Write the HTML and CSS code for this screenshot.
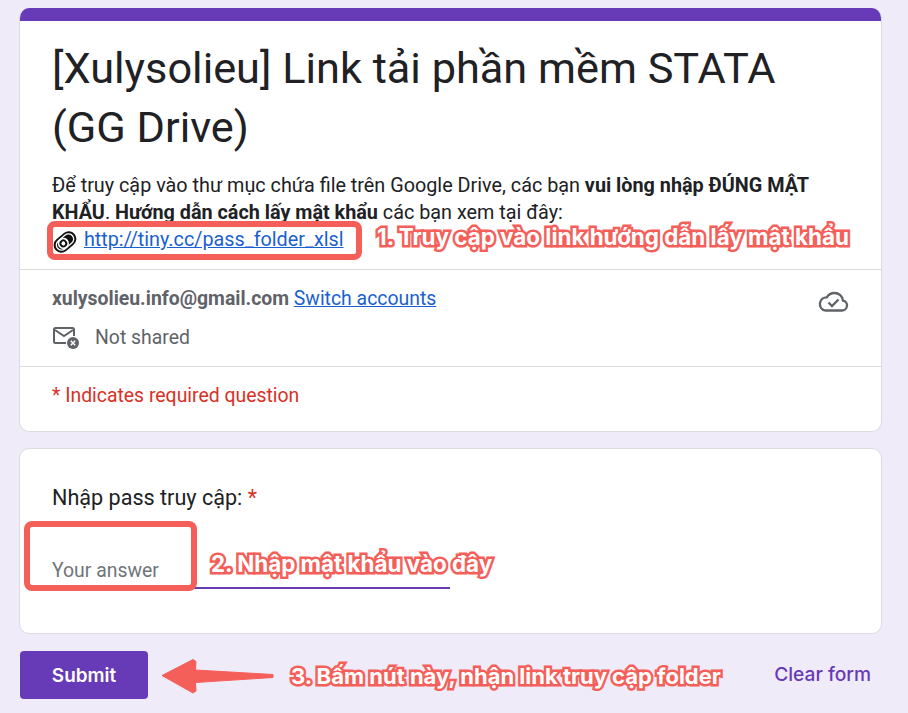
FILE: index.html
```html
<!DOCTYPE html>
<html lang="en-US">
<head>
<meta charset="utf-8">
<meta name="viewport" content="width=device-width, initial-scale=1">
<title>[Xulysolieu] Link tải phần mềm STATA (GG Drive)</title>
<link rel="stylesheet" href="styles.css">
</head>
<body>
<div class="wrapper">

  <div class="card header-card">
    <div class="top-band"></div>
    <div class="intro">
      <h1>[Xulysolieu] Link tải phần mềm STATA (GG Drive)</h1>
      <p>Để truy cập vào thư mục chứa file trên Google Drive, các bạn <b>vui lòng nhập ĐÚNG MẬT</b> <b>KHẨU</b>. <b>Hướng dẫn cách lấy mật khẩu</b> các bạn xem tại đây:<br>
      <svg class="clip-icon" viewBox="0 0 24 24" width="26" height="26">
        <g transform="rotate(-40 12 12)">
          <rect x="0.500" y="5" width="23" height="14" rx="7" fill="#111"/>
          <rect x="3" y="7.200" width="18" height="9.600" rx="4.800" fill="none" stroke="#fff" stroke-width="1.200"/>
          <circle cx="10" cy="12" r="4.400" fill="#111" stroke="#fff" stroke-width="1.600"/>
          <circle cx="10" cy="12" r="1.800" fill="#fff"/>
        </g>
      </svg>
      <a href="#" class="link pass-link">http://tiny.cc/pass_folder_xlsl</a></p>
    </div>
    <div class="account">
      <div class="account-row">
        <span><b class="email">xulysolieu.info@gmail.com</b> <a href="#" class="link">Switch accounts</a></span>
        <svg class="cloud-icon" viewBox="0 0 32 24" width="32" height="24">
          <path d="M8 20.500h17a5 5 0 0 0 1-9.900A8.500 8.500 0 0 0 17.500 3 9 9 0 0 0 9.800 7.300 6.700 6.700 0 0 0 8 20.500z" fill="none" stroke="#5f6368" stroke-width="2.300"/>
          <path d="M11.500 12.500l3.500 3.500 6.500-6.500" fill="none" stroke="#5f6368" stroke-width="2.300"/>
        </svg>
      </div>
      <div class="shared-row">
        <svg class="mail-icon" viewBox="0 0 26 22" width="26" height="22">
          <path d="M13 16H2.500A1.500 1.500 0 0 1 1 14.500V2.500A1.500 1.500 0 0 1 2.500 1h17A1.500 1.500 0 0 1 21 2.500V9" fill="none" stroke="#5f6368" stroke-width="2"/>
          <path d="M2 3l9 6 9-6" fill="none" stroke="#5f6368" stroke-width="2"/>
          <circle cx="20" cy="16" r="6" fill="#5f6368"/>
          <path d="M17.800 13.800l4.400 4.400m0-4.400l-4.400 4.400" stroke="#fff" stroke-width="1.500"/>
        </svg>
        <span>Not shared</span>
      </div>
    </div>
    <div class="required-note">* Indicates required question</div>
  </div>

  <div class="card question-card">
    <div class="question">Nhập pass truy cập: <span class="star">*</span></div>
    <div class="answer">Your answer</div>
  </div>

  <div class="actions">
    <button class="submit" type="button">Submit</button>
    <a href="#" class="clear">Clear form</a>
  </div>

  <!-- red notes drawn on top of the form -->
  <div class="note-box box-link"></div>
  <div class="note-box box-answer"></div>
  <div class="note note-1">1. Truy cập vào link hướng dẫn lấy mật khẩu</div>
  <div class="note note-2">2. Nhập mật khẩu vào đây</div>
  <div class="note note-3">3. Bấm nút này, nhận link truy cập folder</div>
  <svg class="arrow" viewBox="0 0 114 36" width="114" height="36">
    <path d="M1 17.500L32 1.500 35 3.500 34.500 12 112 16.500V19.500L34.500 24.500 35 33 32 35z" fill="#f45f5a" stroke="#f45f5a" stroke-linejoin="round"/>
  </svg>

</div>
</body>
</html>
```

FILE: styles.css
```css
html, body {
  margin: 0;
  height: 713px;
  overflow: hidden;
}
body {
  background: #f0ebf8;
  font-family: Roboto, sans-serif;
  color: #202124;
}
.wrapper {
  position: relative;
  width: 863px;
  height: 713px;
  padding-top: 8px;
  margin-left: 19px;
  box-sizing: border-box;
}
.card {
  box-sizing: border-box;
  background: #fff;
  border: 1px solid #dadce0;
  border-radius: 10px;
}
.header-card {
  height: 424px;
  overflow: hidden;
  border-top: 0;
}
.top-band {
  height: 13px;
  margin: 0 -1px;
  background: #673ab7;
}
.intro {
  height: 249px;
  padding: 18px 32px 0;
  box-sizing: border-box;
  border-bottom: 1px solid #dadce0;
}
h1 {
  margin: 0;
  font-size: 43.3px;
  font-weight: 400;
  line-height: 59px;
  color: #202124;
}
.intro p {
  margin: 15px 0 0;
  font-size: 19.8px;
  line-height: 27px;
}
.clip-icon {
  margin: -2px 0;
  vertical-align: -7px;
}
.link {
  color: #1a5fd0;
}
.pass-link {
  margin-left: 1px;
}
.account {
  height: 97px;
  padding: 16px 32px 0;
  box-sizing: border-box;
  border-bottom: 1px solid #dadce0;
  font-size: 19.4px;
  color: #5f6368;
}
.account-row {
  display: flex;
  justify-content: space-between;
  line-height: 26px;
}
.email {
  font-weight: 700;
}
.cloud-icon {
  margin: 4px 0 0 0;
}
.shared-row {
  display: flex;
  align-items: center;
  gap: 16px;
  margin-top: 11px;
  padding-left: 1px;
  line-height: 26px;
}
.required-note {
  padding: 16px 32px 0;
  font-size: 19.4px;
  line-height: 26px;
  color: #d93025;
}
.question-card {
  height: 186px;
  margin-top: 16px;
  padding: 35px 32px 0;
}
.question {
  font-size: 21.6px;
  line-height: 28px;
}
.star {
  color: #d93025;
}
.answer {
  width: 398px;
  height: 64px;
  box-sizing: border-box;
  margin-top: 13px;
  padding-top: 34px;
  border-bottom: 2px solid #673ab7;
  font-size: 19.4px;
  line-height: 24px;
  color: #70757a;
}
.actions {
  display: flex;
  justify-content: space-between;
  align-items: center;
  margin-top: 17px;
}
.submit {
  width: 128px;
  height: 48px;
  margin-left: 1px;
  padding: 0;
  border: 0;
  border-radius: 4px;
  background: #673ab7;
  color: #fff;
  font-family: Inter, sans-serif;
  font-size: 18.9px;
  font-weight: 600;
}
.clear {
  margin: 0 11px 2px 0;
  color: #673ab7;
  font-family: Inter, sans-serif;
  font-size: 19.2px;
  font-weight: 500;
  text-decoration: none;
}
.note-box {
  position: absolute;
  box-sizing: border-box;
  border: 6px solid #f45f5a;
  border-radius: 8px;
}
.box-link {
  left: 28px;
  top: 221px;
  width: 315px;
  height: 39px;
}
.box-answer {
  left: 5px;
  top: 521px;
  width: 173px;
  height: 70px;
}
.note {
  position: absolute;
  font-family: Inter, sans-serif;
  font-size: 22.4px;
  font-weight: 700;
  line-height: 30px;
  white-space: nowrap;
  color: #fff;
  -webkit-text-stroke: 5px #f45f5a;
  paint-order: stroke fill;
}
.note-1 {
  left: 358px;
  top: 222px;
}
.note-2 {
  left: 192px;
  top: 549px;
}
.note-3 {
  left: 272px;
  top: 661px;
  font-size: 22px;
}
.arrow {
  position: absolute;
  left: 142px;
  top: 658px;
}
```
